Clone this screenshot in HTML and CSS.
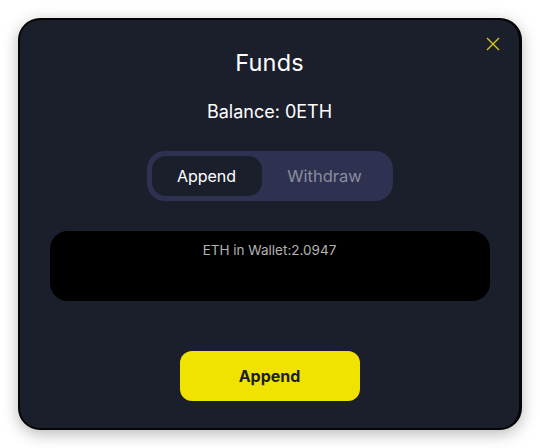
FILE: index.html
```html
<!DOCTYPE html>
<html>
<head>
<meta charset="utf-8">
<link rel="stylesheet" href="styles.css">
</head>
<body>
<div class="modal">
  <button class="close" aria-label="Close">
    <svg width="14" height="14" viewBox="0 0 14 14"><path d="M1 1L13 13M13 1L1 13" stroke="#d4c81c" stroke-width="1.4" fill="none"/></svg>
  </button>
  <h1 class="title">Funds</h1>
  <div class="balance">Balance: 0ETH</div>
  <div class="tabs">
    <div class="tab active">Append</div>
    <div class="tab">Withdraw</div>
  </div>
  <div class="wallet">ETH in Wallet:2.0947</div>
  <button class="action">Append</button>
</div>
</body>
</html>
```
FILE: styles.css
```css
html, body { margin: 0; padding: 0; background: #ffffff; }
body { width: 540px; height: 448px; padding: 18px; box-sizing: border-box; font-family: Inter, "Open Sans", sans-serif; }
.modal {
  position: relative;
  width: 504px; height: 412px; box-sizing: border-box;
  background: #1b1e2b;
  border: 2px solid #050505;
  border-right-width: 3px;
  border-radius: 22px;
  box-shadow: 0 4px 16px rgba(0,0,0,0.28);
  display: flex; flex-direction: column; align-items: center;
  padding-top: 28px;
}
.close {
  position: absolute; top: 17px; right: 19px;
  width: 14px; height: 14px; padding: 0; border: 0; background: none;
  display: flex;
}
.title { margin: 0; font-size: 23.5px; font-weight: 400; color: #ffffff; line-height: 30px; letter-spacing: 0.2px; }
.balance { margin-top: 22px; font-size: 18px; color: #ffffff; line-height: 24px; }
.tabs {
  margin-top: 27px;
  width: 246px; height: 50px; box-sizing: border-box;
  background: #2e3250; border-radius: 18px;
  padding: 5px; display: flex; gap: 0;
}
.tab {
  width: 110px; height: 40px; border-radius: 14px;
  display: flex; align-items: center; justify-content: center;
  font-size: 16px; color: #8a8c9f;
}
.tab + .tab { flex: 1; font-size: 16.5px; }
.tab.active { background: #1b1e2b; color: #ffffff; }
.wallet {
  margin-top: 30px;
  width: 440px; height: 70px; box-sizing: border-box;
  background: #000000; border-radius: 18px;
  text-align: center; padding-top: 10px;
  font-size: 13.5px; color: #b4b4b4; line-height: 18px;
}
.action {
  margin-top: 50px;
  width: 180px; height: 50px; border: 0; border-radius: 12px;
  background: #f1e300; color: #1b1e2b;
  font-family: Inter, sans-serif; font-size: 16px; font-weight: 700;
}
```
